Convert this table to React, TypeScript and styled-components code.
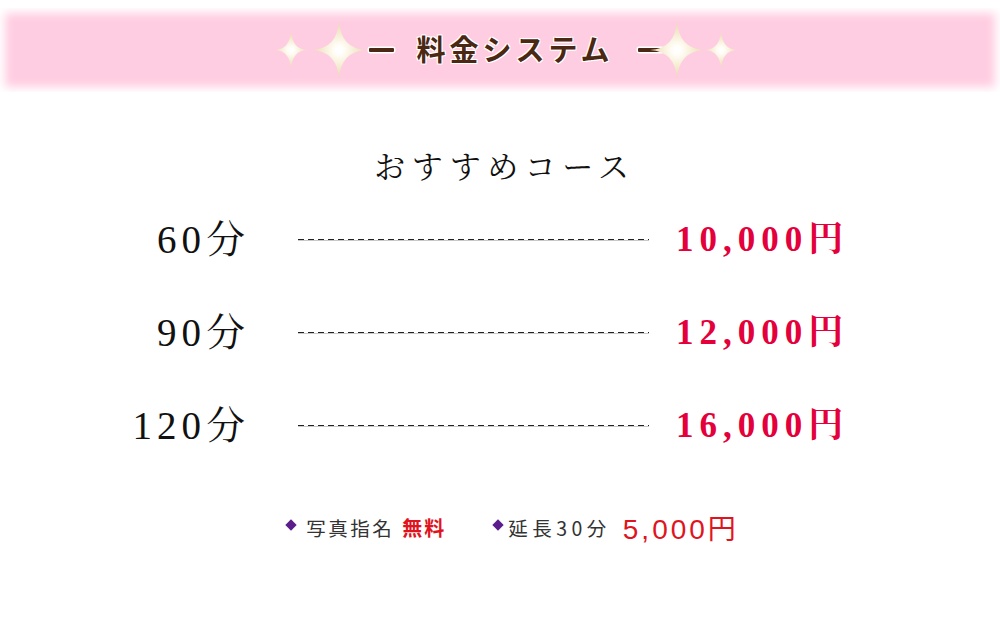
import React from "react";
import styled, { createGlobalStyle } from "styled-components";

const GlobalStyle = createGlobalStyle`
  html, body { margin: 0; padding: 0; background: #fff; }
  body { width: 1000px; height: 627px; overflow: hidden; font-family: "Noto Sans CJK JP", sans-serif; }
`;

const Page = styled.div`
  display: flex;
  flex-direction: column;
  align-items: stretch;
  padding-top: 8px;
`;

const Banner = styled.header`
  height: 84px;
  background: #ffcde1;
  box-shadow: inset 0 0 10px 5px #fff;
  display: flex;
  align-items: center;
  justify-content: center;
  padding-left: 12px;
`;

const Spark = styled.svg<{ $gap: number }>`
  flex: none;
  margin-left: ${(p) => p.$gap}px;
  position: relative;
  z-index: 1;
`;

const Title = styled.h1`
  margin: 0 0 0 3px;
  display: flex;
  align-items: center;
  font-family: "Noto Sans CJK JP", sans-serif;
  font-weight: 700;
  font-size: 29px;
  line-height: 40px;
  color: #4a2814;
  text-shadow: 1px 1px 0 #fff, -1px -1px 0 #fff, 1px -1px 0 #fff, -1px 1px 0 #fff, 0 0 2px #fff;
`;

const Bar = styled.span`
  display: inline-block;
  width: 25px;
  height: 4px;
  border-radius: 1px;
  background: #4a2814;
  box-shadow: 0 0 0 1.5px #fff;
`;

const Label = styled.span`
  margin: -4px 24px 0 22px;
  letter-spacing: 4px;
`;

const Content = styled.main`
  display: flex;
  flex-direction: column;
  align-items: center;
`;

const Heading = styled.h2`
  margin: 53px 0 0 10px;
  font-family: "Noto Serif CJK JP", "Liberation Serif", "Noto Sans CJK JP", serif;
  font-weight: 400;
  font-size: 31px;
  line-height: 40px;
  letter-spacing: 6.5px;
  color: #111;
`;

const List = styled.div`
  margin-top: 8px;
  display: grid;
  grid-template-columns: 160px 351px 180px;
  column-gap: 27px;
  grid-auto-rows: 93px;
  align-items: center;
  margin-right: 33px;
`;

const Minutes = styled.div`
  justify-self: end;
  margin-right: 21px;
  white-space: nowrap;
  font-family: "Liberation Serif", "Noto Serif CJK JP", "Noto Sans CJK JP", serif;
  font-size: 39px;
  letter-spacing: 5px;
  line-height: 44px;
  color: #111;
`;

const Dots = styled.div`
  height: 2px;
  background:
    repeating-linear-gradient(to right, #222 0 6px, transparent 6px 10px) top / 100% 1px no-repeat,
    linear-gradient(#c8c8c8, #c8c8c8) bottom / 100% 1px no-repeat;
`;

const Price = styled.div`
  white-space: nowrap;
  font-family: "Liberation Serif", "Noto Serif CJK JP", "Noto Sans CJK JP", serif;
  font-weight: 700;
  font-size: 35px;
  letter-spacing: 6px;
  line-height: 44px;
  color: #e3003b;
`;

const Notes = styled.div`
  margin-top: 40px;
  margin-left: 26px;
  display: flex;
  align-items: center;
  height: 30px;
  font-family: "Noto Sans CJK JP", sans-serif;
  color: #333;
`;

const Note = styled.span<{ $gap: number }>`
  display: inline-flex;
  align-items: center;
  margin-left: ${(p) => p.$gap}px;
`;

const Diamond = styled.span<{ $after: number }>`
  width: 8px;
  height: 8px;
  background: #5c1d8c;
  transform: rotate(45deg);
  margin: -5px ${(p) => p.$after}px 0 0;
`;

const NoteText = styled.span<{ $ls: number }>`
  font-size: 19.5px;
  letter-spacing: ${(p) => p.$ls}px;
`;

const Free = styled.span`
  margin-left: 8px;
  font-size: 20px;
  font-weight: 700;
  letter-spacing: 2px;
  color: #e0141e;
`;

const Extra = styled.span`
  margin-left: 12px;
  font-family: "Liberation Sans", "Noto Sans CJK JP", sans-serif;
  font-size: 28px;
  letter-spacing: 3px;
  color: #e0141e;
`;

function Sparkle({ w, h, gap }: { w: number; h: number; gap: number }) {
  const hw = w / 2;
  const hh = h / 2;
  const c = Math.min(w, h) * 0.03;
  const id = `g${w}${h}${gap}`;
  return (
    <Spark $gap={gap} width={w} height={h} viewBox={`${-hw} ${-hh} ${w} ${h}`}>
      <defs>
        <radialGradient id={id} cx="0" cy="0" r={Math.max(hw, hh)} gradientUnits="userSpaceOnUse">
          <stop offset="0" stopColor="#ffffff" />
          <stop offset="0.18" stopColor="#fffdf6" />
          <stop offset="1" stopColor="#e8d9a8" />
        </radialGradient>
        <filter id={`${id}b`} x="-1" y="-1" width="3" height="3">
          <feGaussianBlur stdDeviation="1.5" />
        </filter>
      </defs>
      <circle r={Math.min(w, h) * 0.13} fill="#fff8e0" filter={`url(#${id}b)`} />
      <path
        d={`M0 ${-hh} Q${c} ${-c} ${hw} 0 Q${c} ${c} 0 ${hh} Q${-c} ${c} ${-hw} 0 Q${-c} ${-c} 0 ${-hh} Z`}
        fill={`url(#${id})`}
      />
      <circle r={Math.min(w, h) * 0.07} fill="#fff" />
    </Spark>
  );
}

const rows = [
  { m: "60分", p: "10,000円" },
  { m: "90分", p: "12,000円" },
  { m: "120分", p: "16,000円" },
];

export default function App() {
  return (
    <>
      <GlobalStyle />
      <Page>
        <Banner>
          <Sparkle w={32} h={38} gap={0} />
          <Sparkle w={54} h={58} gap={5} />
          <Title>
            <Bar />
            <Label>料金システム</Label>
            <Bar />
          </Title>
          <Sparkle w={54} h={58} gap={-13} />
          <Sparkle w={32} h={38} gap={1} />
        </Banner>
        <Content>
          <Heading>おすすめコース</Heading>
          <List>
            {rows.map((r) => (
              <React.Fragment key={r.m}>
                <Minutes>{r.m}</Minutes>
                <Dots />
                <Price>{r.p}</Price>
              </React.Fragment>
            ))}
          </List>
          <Notes>
            <Note $gap={0}>
              <Diamond $after={11} />
              <NoteText $ls={2.5}>写真指名</NoteText>
              <Free>無料</Free>
            </Note>
            <Note $gap={48}>
              <Diamond $after={6} />
              <NoteText $ls={4.5}>延長30分</NoteText>
              <Extra>5,000円</Extra>
            </Note>
          </Notes>
        </Content>
      </Page>
    </>
  );
}
